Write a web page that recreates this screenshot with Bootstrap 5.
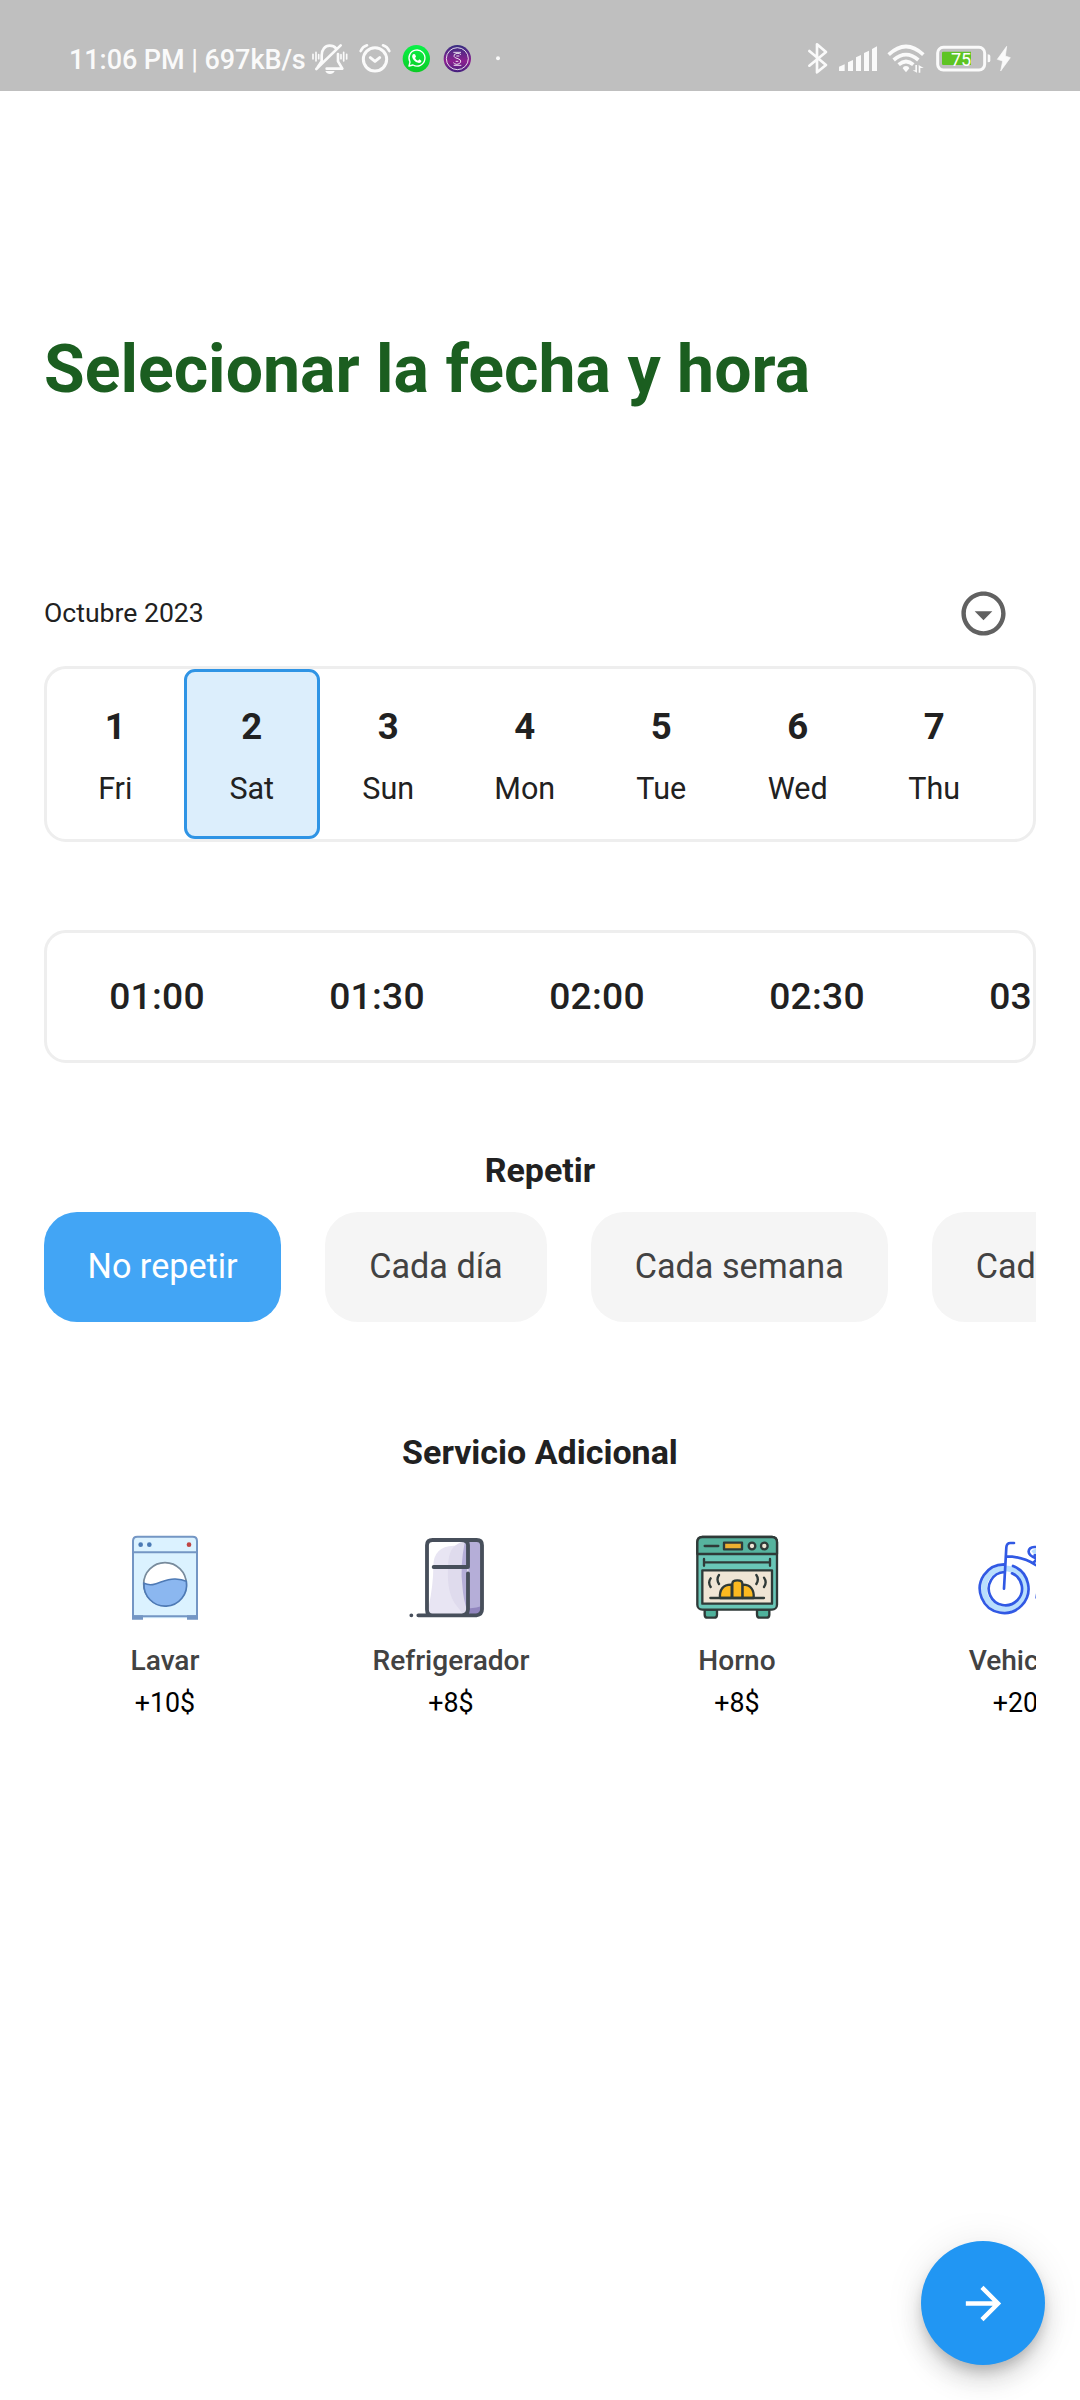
<!DOCTYPE html>
<html lang="es">
<head>
<meta charset="utf-8">
<meta name="viewport" content="width=device-width, initial-scale=1">
<title>Selecionar la fecha y hora</title>
<link href="https://cdn.jsdelivr.net/npm/bootstrap@5.3.0/dist/css/bootstrap.min.css" rel="stylesheet">
<style>
  body { font-family: Roboto, "Liberation Sans", sans-serif; color: #212121; background: #fff; min-height: 2400px; overflow-x: hidden; }
  svg { display: block; flex: none; }
  .status-bar { height: 91px; background: #bfbfbf; color: #fafafa; padding-left: 69px; padding-right: 64px; }
  .status-clock { font-size: 27px; font-weight: 500; line-height: 40px; margin-top: 40px; width: 241px; white-space: nowrap; letter-spacing: -.06px; }
  .content { padding: 0 44px; }
  .page-title { margin: 240px 0 0; font-size: 66.15px; line-height: 78px; font-weight: 700; color: #1b5e20; white-space: nowrap; }
  .month-row { margin-top: 177px; height: 54px; padding-right: 26px; font-size: 26.6px; }
  .panel { border: 3px solid #eee; border-radius: 22px; overflow: hidden; }
  .days { margin-top: 26px; height: 176px; }
  .day { flex: 0 0 136.5px; border: 3px solid transparent; border-radius: 11px; padding-top: 34px; }
  .day-on { background: #dceefc; border-color: #2f94e5; }
  .day-num { font-size: 36.6px; font-weight: 700; line-height: 42px; }
  .day-name { font-size: 30.5px; line-height: 40px; margin-top: 21px; }
  .hours { margin-top: 88px; height: 133px; }
  .hour { flex: 0 0 220px; font-size: 37.2px; font-weight: 500; letter-spacing: .25px; padding-top: 1px; }
  .section-title { font-size: 34px; line-height: 40px; font-weight: 700; margin: 87px 0 0; }
  .chips { gap: 44px; margin-top: 22px; }
  .chip { flex: none; height: 110px; padding: 0 44px; border: 0; border-radius: 33px; background: #f5f5f5; color: #424242; font-size: 34.2px; }
  .chip-on { background: #42a5f5; color: #fff; padding: 0 43.5px; }
  .extra-title { margin-top: 110px; }
  .services { gap: 44px; margin-top: 58px; }
  .service { flex: 0 0 242px; white-space: nowrap; }
  .service-name { font-size: 28.1px; font-weight: 500; line-height: 36px; margin-top: 18px; color: #424242; }
  .service-price { font-size: 26.8px; line-height: 36px; margin-top: 6px; color: #000; }
  .fab { right: 35px; bottom: 35px; width: 124px; height: 124px; padding: 0; border: 0; background: #2196f3; box-shadow: 0 8px 14px -3px rgba(0,0,0,.2), 0 16px 28px rgba(0,0,0,.13), 0 3px 40px rgba(0,0,0,.09); }
</style>
</head>
<body>
<header class="status-bar d-flex">
  <div class="status-clock">11:06 PM | 697kB/s</div>
  <!-- muted bell -->
  <svg width="42" height="91" viewBox="810 0 126 273" fill="none" stroke="#fafafa" stroke-width="8" stroke-linecap="round" stroke-linejoin="round">
    <path d="M845 182V166C845 149 855 137 869 137C877 137 884 140 888 145M845 184L833 202M894 162V184L907 206H860M829 207L902 136"/>
    <path d="M856 213H884C880 225 860 225 856 213Z" fill="#fafafa" stroke="none"/>
    <path d="M819 163V177M828 157V183M911 157V183M920 163V177M836 164V176M903 164V176" stroke-width="5"/>
  </svg>
  <!-- alarm clock -->
  <svg width="46" height="91" viewBox="936 0 138 273" fill="none" stroke="#fafafa" stroke-linecap="round" stroke-linejoin="round">
    <circle cx="1005" cy="178" r="35" stroke-width="9"/>
    <path d="M991 173L1005 184L1019 173" stroke-width="9"/>
    <path d="M962 153Q968 140 981 136M1029 136Q1042 140 1048 153" stroke-width="8"/>
  </svg>
  <!-- chat app -->
  <svg width="41" height="91" viewBox="1074 0 123 273">
    <defs><linearGradient id="wa" x1="0" y1="0" x2="0" y2="1"><stop offset="0" stop-color="#0af248"/><stop offset="1" stop-color="#0bcb25"/></linearGradient>
    <linearGradient id="pu" x1="0" y1="0" x2="0" y2="1"><stop offset="0" stop-color="#352c80"/><stop offset=".6" stop-color="#8c2090"/><stop offset="1" stop-color="#42207d"/></linearGradient></defs>
    <circle cx="1129" cy="176" r="41" fill="url(#wa)"/>
    <path d="M1107 198L1110 186A24 24 0 1 1 1119 195Z" fill="none" stroke="#fff" stroke-width="4" stroke-linejoin="round"/>
    <path d="M1119 163Q1123 160 1126 164L1128 170L1125 174Q1128 180 1134 182L1138 178L1144 182Q1145 188 1137 189Q1128 189 1121 180Q1113 170 1119 163Z" fill="#fff"/>
  </svg>
  <!-- coin app -->
  <svg width="41" height="91" viewBox="1197 0 123 273" fill="none" stroke="#fff">
    <circle cx="1252" cy="176" r="41" fill="url(#pu)" stroke="none"/>
    <circle cx="1252" cy="176" r="33" stroke-width="2.500"/>
    <path d="M1240 157H1263M1263 164Q1260 160 1251 160Q1240 162 1242 169Q1245 175 1254 176Q1264 179 1262 186Q1259 193 1250 193Q1243 192 1240 188M1241 196H1264M1249 168H1258M1247 184H1255" stroke-width="2.500"/>
  </svg>
  <svg width="40" height="91" viewBox="1320 0 120 273"><circle cx="1374" cy="175" r="6" fill="#fafafa"/></svg>

  <!-- bluetooth -->
  <svg class="ms-auto" width="31" height="91" viewBox="75 0 93 273" fill="none" stroke="#fafafa" stroke-width="8" stroke-linecap="round" stroke-linejoin="round">
    <path d="M88 153L138 195L111 217V133L138 156L88 197"/>
  </svg>
  <!-- signal strength -->
  <svg width="46" height="91" viewBox="168 0 138 273" fill="#fafafa">
    <path d="M177 200L194 193V213H177ZM204 187L219 180V213H204ZM228 172L243 165V213H228ZM252 159L267 152V213H252ZM276 147L291 139V213H276Z"/>
  </svg>
  <!-- wifi -->
  <svg width="50" height="91" viewBox="306 0 150 273" fill="none" stroke="#fafafa" stroke-width="11">
    <path d="M326 164Q378 115 430 164M341 180Q378 148 415 180M356 194Q378 175 400 194"/>
    <path d="M378 198Q386 198 388 205L378 217L368 205Q370 198 378 198Z" fill="#fafafa" stroke="none"/>
    <path d="M398 211H406V195H411V218ZM416 195V218H421V204H431Z" fill="#fafafa" stroke="none"/>
  </svg>
  <!-- battery -->
  <svg width="60" height="91" viewBox="456 0 180 273">
    <rect x="473" y="142" width="141" height="68" rx="17" fill="none" stroke="#fafafa" stroke-width="9"/>
    <path d="M490 155H573V195H490Q486 195 486 191V159Q486 155 490 155Z" fill="#5ec423"/>
    <path d="M623 163Q631 163 631 168V182Q631 187 623 187Z" fill="#fafafa"/>
    <text x="543" y="198" font-size="54" text-anchor="middle" fill="#fff" font-family="Roboto" font-weight="400">75</text>
  </svg>
  <!-- charging bolt -->
  <svg width="24" height="91" viewBox="636 0 72 273"><path d="M680 139L652 178L668 183L662 213L691 173L676 168Z" fill="#fafafa" stroke="#fafafa" stroke-width="2"/></svg>
</header>

<main class="content">
  <h1 class="page-title">Selecionar la fecha y hora</h1>

  <div class="month-row d-flex align-items-center justify-content-between">
    <span>Octubre 2023</span>
    <svg width="53" height="53" viewBox="0 0 24 24" fill="#616161"><path d="M12 4c4.41 0 8 3.59 8 8s-3.59 8-8 8-8-3.59-8-8 3.59-8 8-8m0-2C6.48 2 2 6.48 2 12s4.48 10 10 10 10-4.48 10-10S17.520 2 12 2zm0 13l-4-4h8z"/></svg>
  </div>

  <div class="panel days d-flex text-center">
    <div class="day"><div class="day-num">1</div><div class="day-name">Fri</div></div>
    <div class="day day-on"><div class="day-num">2</div><div class="day-name">Sat</div></div>
    <div class="day"><div class="day-num">3</div><div class="day-name">Sun</div></div>
    <div class="day"><div class="day-num">4</div><div class="day-name">Mon</div></div>
    <div class="day"><div class="day-num">5</div><div class="day-name">Tue</div></div>
    <div class="day"><div class="day-num">6</div><div class="day-name">Wed</div></div>
    <div class="day"><div class="day-num">7</div><div class="day-name">Thu</div></div>
  </div>

  <div class="panel hours d-flex align-items-center text-center">
    <div class="hour">01:00</div>
    <div class="hour">01:30</div>
    <div class="hour">02:00</div>
    <div class="hour">02:30</div>
    <div class="hour">03:00</div>
  </div>

  <h2 class="section-title text-center">Repetir</h2>
  <div class="chips d-flex overflow-hidden">
    <button type="button" class="chip chip-on">No repetir</button>
    <button type="button" class="chip">Cada día</button>
    <button type="button" class="chip">Cada semana</button>
    <button type="button" class="chip">Cada mes</button>
  </div>

  <h2 class="section-title extra-title text-center">Servicio Adicional</h2>
  <div class="services d-flex overflow-hidden text-center">
    <div class="service">
      <svg class="mx-auto" width="88" height="95" viewBox="33 60 264 285">
        <path d="M69 325V93Q69 80 82 80H248Q261 80 261 93V325Z" fill="#dbf2ff"/>
        <path d="M69 319V93Q69 80 82 80H248Q261 80 261 93V319ZM69 127H261" fill="none" stroke="#7496c4" stroke-width="6"/>
        <path d="M66 316H99V329H66ZM231 316H264V329H231Z" fill="#7496c4"/>
        <circle cx="92" cy="104" r="7" fill="#4a7ab5"/><circle cx="118" cy="104" r="7" fill="#4a7ab5"/><circle cx="237" cy="104" r="7" fill="#c04444"/>
        <circle cx="165" cy="222" r="64" fill="#fff" stroke="#788b9c" stroke-width="5"/>
        <path d="M102 220C135 235 158 205 196 207Q216 208 229 214A64 64 0 1 1 102 220Z" fill="#8bb7f0" stroke="#4e7ab5" stroke-width="5"/>
      </svg>
      <div class="service-name">Lavar</div><div class="service-price">+10$</div>
    </div>
    <div class="service">
      <svg class="mx-auto" width="88" height="95" viewBox="171 60 264 285" stroke-linecap="round" stroke-linejoin="round">
        <path d="M335 90H382Q396 90 396 104V300Q396 316 380 316H335Z" fill="#b5aed8"/>
        <path d="M350 294Q378 296 393 289V302Q390 312 378 312H350Z" fill="#9185be"/>
        <rect x="231" y="90" width="124" height="226" rx="12" fill="#fff"/>
        <path d="M338 94Q330 108 311 107Q250 109 250 169Q250 225 236 290Q236 312 248 312H348V94Z" fill="#e8e5f3"/>
        <path d="M340 94Q326 98 309 113Q294 130 294 175Q290 250 318 285Q332 302 338 312H352V94Z" fill="#dfdbed"/>
        <path d="M344 98Q330 168 337 226Q340 272 352 302V98Z" fill="#b5aed8"/>
        <path d="M205 316H379Q396 314 396 298V106Q396 90 380 90H248Q231 90 231 106V299Q231 315 247 316M335 90Q354 91 354 105V171H251M354 190V298Q353 315 336 316M184 316V316.100" fill="none" stroke="#474f5b" stroke-width="11.500"/>
      </svg>
      <div class="service-name">Refrigerador</div><div class="service-price">+8$</div>
    </div>
    <div class="service">
      <svg class="mx-auto" width="88" height="95" viewBox="69 60 264 285" stroke="#2f3a38" stroke-width="7" stroke-linecap="round" stroke-linejoin="round" fill="none">
        <path d="M104 299V314Q104 323 113 323H132Q141 323 141 314V299ZM261 299V314Q261 323 270 323H289Q298 323 298 314V299Z" fill="#4fb29c"/>
        <rect x="82" y="81" width="239" height="218" rx="15" fill="#69c6b7"/>
        <path d="M82 132V96Q82 81 97 81H306Q321 81 321 96V132Z" fill="#56b39e"/>
        <path d="M104 108H145M102 147V167M300 147V167M102 157H300"/>
        <rect x="162" y="98" width="54" height="20" fill="#eeb030"/>
        <circle cx="246" cy="108" r="10" fill="#efe5d5"/><circle cx="283" cy="108" r="10" fill="#efe5d5"/>
        <rect x="97" y="181" width="209" height="100" fill="#efe5d5"/>
        <path d="M150 264C148 241 158 223 185 224V264Z" fill="#fcb920"/><path d="M251 264C253 241 243 223 217 224V264Z" fill="#fcb920"/>
        <path d="M187 264V221C187 208 217 208 217 221V264Z" fill="#fcb920"/>
        <path d="M121 264H282M122 205Q113 217 122 231M147 195Q138 208 147 222M259 195Q268 208 259 222M282 203Q292 217 282 231"/>
      </svg>
      <div class="service-name">Horno</div><div class="service-price">+8$</div>
    </div>
    <div class="service">
      <svg class="mx-auto" width="88" height="95" viewBox="117 60 264 285" overflow="visible" fill="none" stroke="#3159e4" stroke-width="8" stroke-linecap="round" stroke-linejoin="round">
        <circle cx="193" cy="236" r="61" stroke="#b9defd" stroke-width="17"/>
        <path d="M274 124Q278 115 300 115V132H282Z" fill="#b9defd" stroke="none"/>
        <path d="M193 163A73 73 0 1 0 219 168M193 186A50 50 0 1 0 216 190M192 236L199 112Q200 99 211 99H222M199 139Q247 139 288 165L304 175M280 160L290 146Q265 136 266 124Q267 112 283 111H330M284 136H330M290 263Q296 205 350 187"/>
      </svg>
      <div class="service-name">Vehiculo</div><div class="service-price">+20$</div>
    </div>
  </div>
</main>

<button type="button" class="fab position-fixed rounded-circle d-flex align-items-center justify-content-center" aria-label="Continuar">
  <svg width="53" height="53" viewBox="0 0 24 24" fill="#fff"><path d="M12 4l-1.410 1.410L16.170 11H4v2h12.170l-5.580 5.590L12 20l8-8z"/></svg>
</button>
<script src="https://cdn.jsdelivr.net/npm/bootstrap@5.3.0/dist/js/bootstrap.bundle.min.js"></script>
</body>
</html>
